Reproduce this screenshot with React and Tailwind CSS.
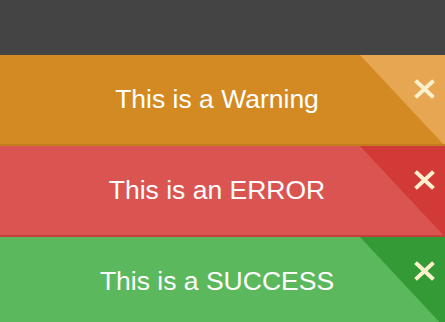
import React from "react";

const alerts = [
  {
    text: "This is a Warning",
    bg: "bg-[#d48a22]",
    border: "border-[#c47d1c]",
    corner: "#e6a652",
  },
  {
    text: "This is an ERROR",
    bg: "bg-[#da5551]",
    border: "border-[#c23f3b]",
    corner: "#d13a36",
  },
  {
    text: "This is a SUCCESS",
    bg: "bg-[#5cb85c]",
    border: "border-[#4a9e4a]",
    corner: "#339a35",
  },
];

function CloseIcon() {
  return (
    <svg width="21" height="20" viewBox="0 0 21 20" className="block">
      <path
        d="M3 3 L18 17 M18 3 L3 17"
        stroke="#fdf0cc"
        strokeWidth="4"
        strokeLinecap="square"
        fill="none"
      />
    </svg>
  );
}

function Alert({ text, bg, border, corner }) {
  return (
    <div
      className={`relative h-[91px] flex items-center justify-center pr-[11px] overflow-hidden border-b-2 ${bg} ${border}`}
    >
      {/* corner fold */}
      <svg
        width="85"
        height="91"
        viewBox="0 0 85 91"
        className="absolute right-0 top-0"
      >
        <polygon points="0,0 85,0 85,91" fill={corner} />
      </svg>

      <span className="relative text-white text-[26.5px] font-['Liberation_Sans',Arial,sans-serif]">
        {text}
      </span>

      <button className="absolute right-[10px] top-[24px] p-0 bg-transparent">
        <CloseIcon />
      </button>
    </div>
  );
}

export default function App() {
  return (
    <div className="w-[445px] h-[322px] overflow-hidden bg-[#444444]">
      <div className="h-[55px] bg-[#444444]" />
      {alerts.map((a) => (
        <Alert key={a.text} {...a} />
      ))}
    </div>
  );
}
